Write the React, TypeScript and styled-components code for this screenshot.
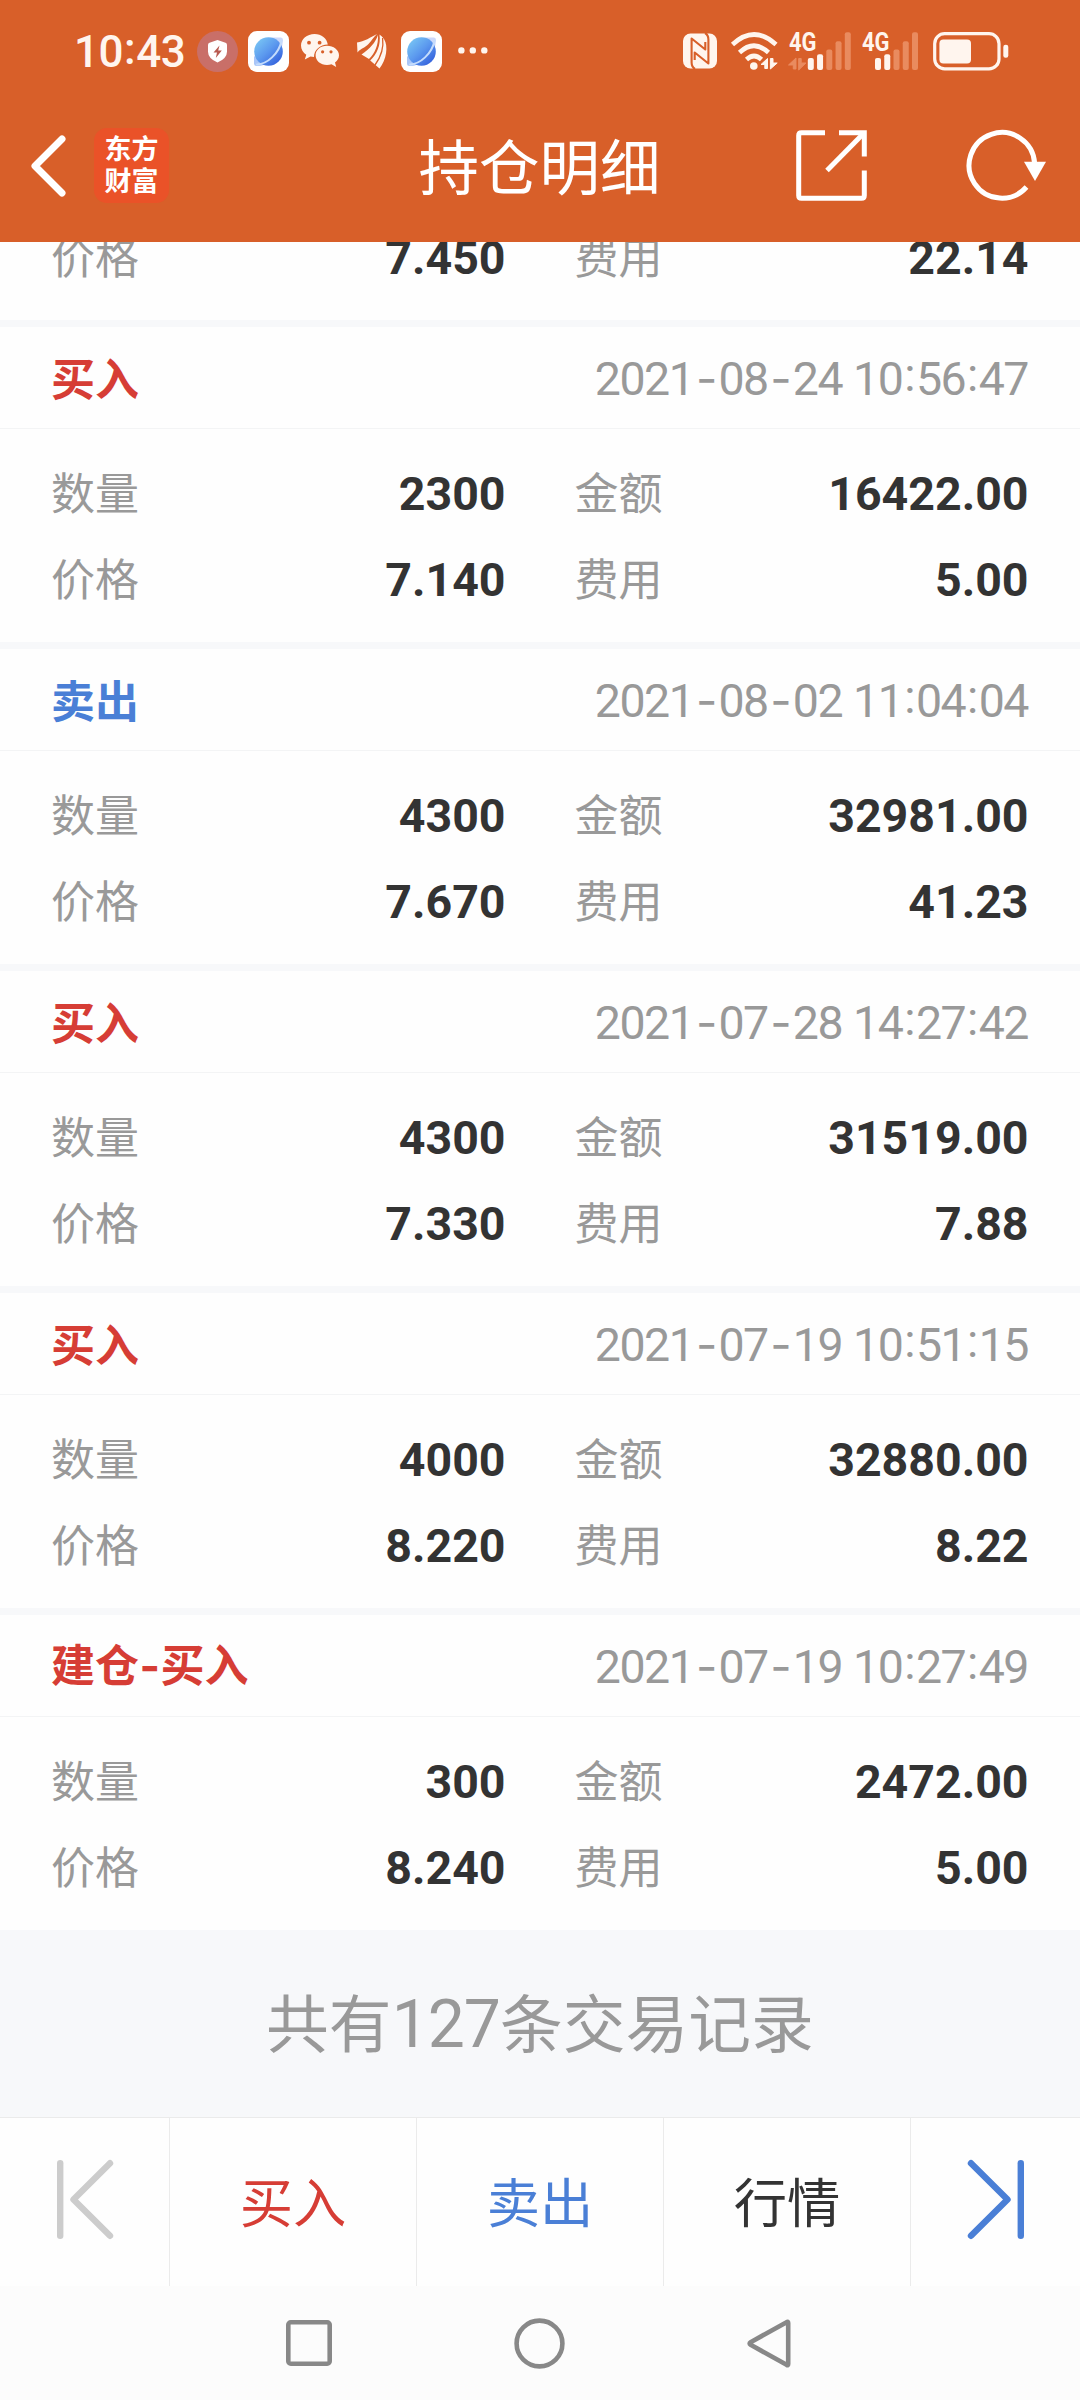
import React from "react";
import styled, { createGlobalStyle } from "styled-components";

const CJK = '"Noto Sans CJK SC", sans-serif';
const NUM = 'Roboto, "Noto Sans CJK SC", sans-serif';

const RED = "#d63d35";
const BLUE = "#4a7fd6";
const INK = "#333333";
const MUTED = "#999999";
const ORANGE = "#d85f29";
const CREAM = "#fff5ee";

const GlobalStyle = createGlobalStyle`
  *, *::before, *::after { box-sizing: border-box; }
  body { margin: 0; background: #fff; }
`;

const Screen = styled.div`
  width: 1080px;
  height: 2400px;
  display: flex;
  flex-direction: column;
  overflow: hidden;
  background: #fefefe;
  font-family: ${CJK};
`;

/* ---------- status bar ---------- */

const Header = styled.header`
  height: 242px;
  flex: none;
  background: ${ORANGE};
`;

const StatusBar = styled.div`
  height: 102px;
  padding: 0 71px 0 74px;
  display: flex;
  align-items: center;
  justify-content: space-between;
`;

const StatusGroup = styled.div`
  display: flex;
  align-items: center;
`;

const Clock = styled.span`
  width: 123px;
  padding-top: 1px;
  font: 500 44px/60px ${NUM};
  letter-spacing: -0.5px;
  color: ${CREAM};
`;

const Colon = styled.span<{ $lift: number; $gap: number }>`
  position: relative;
  top: ${(p) => -p.$lift}px;
  padding: 0 ${(p) => p.$gap}px;
`;

const Glyph = styled.svg<{ $ml?: number }>`
  display: block;
  flex: none;
  overflow: visible;
  margin-left: ${(p) => p.$ml ?? 0}px;
`;

const NetLabel = styled.text`
  font: 700 26px ${NUM};
`;

const Shield = () => (
  <Glyph width="41" height="41" viewBox="0 0 41 41">
    <circle cx="20.5" cy="20.5" r="20.5" fill="#c96f68" />
    <path
      d="M20.5 9 L28.5 11.8 Q30 12.4 30 14 V20.5 Q30 27.5 20.5 31.5 Q11 27.5 11 20.5 V14 Q11 12.4 12.5 11.8 Z"
      fill="#fff"
    />
    <path d="M22.5 14.5 L16.5 21.5 H20 L18.8 27 L24.8 19.6 H21.2 Z" fill="#b85a50" />
  </Glyph>
);

const Browser = ({ id, ml }: { id: string; ml: number }) => (
  <Glyph width="41" height="41" viewBox="0 0 41 41" $ml={ml}>
    <defs>
      <linearGradient id={id} x1="0.1" y1="0.1" x2="0.85" y2="0.9">
        <stop offset="0" stopColor="#78c4f4" />
        <stop offset="0.5" stopColor="#5b98ee" />
        <stop offset="1" stopColor="#3563dd" />
      </linearGradient>
    </defs>
    <rect width="41" height="41" rx="9" fill="#fff" />
    <path d="M24 6.5 H33 Q35 6.5 35 9 Q35 15 32 20 Z" fill="#cdd8fa" />
    <path d="M6 25 V32.5 Q6 35 8.5 35 Q13 35 17 33.5 Z" fill="#a9c6f8" />
    <circle cx="20.5" cy="20.5" r="14.3" fill={`url(#${id})`} />
    <path
      d="M9 33.5 C19 33 31 23 33.5 9.5"
      fill="none"
      stroke="#c4dcfc"
      strokeWidth="2"
      strokeLinecap="round"
    />
  </Glyph>
);

const Chat = () => (
  <Glyph width="38" height="34" viewBox="0 0 38 34" $ml={12}>
    <path
      d="M13.5 0 C6 0 0 5 0 11.5 C0 15.3 2 18.6 5.3 20.7 L3.8 25.5 L9.5 22.6 Q11 23 13 23 C13 16 19 11 26.8 10.6 C26 4.5 20.5 0 13.5 0 Z"
      fill={CREAM}
    />
    <path
      d="M26 11.8 C19.5 11.8 14.6 16 14.6 21.3 C14.6 26.7 19.5 31 26 31 Q28.5 31 30.5 30.3 L35.2 33 L34 28.6 C36.5 26.8 38 24.3 38 21.3 C38 16 32.5 11.8 26 11.8 Z"
      fill={CREAM}
    />
    <g fill={ORANGE}>
      <circle cx="8" cy="8.7" r="1.9" />
      <circle cx="18.6" cy="8.7" r="1.9" />
      <circle cx="21.6" cy="17.8" r="1.6" />
      <circle cx="30" cy="17.8" r="1.6" />
    </g>
  </Glyph>
);

const Wings = () => (
  <Glyph width="30" height="35" viewBox="0 0 30 35" $ml={17.5}>
    <g fill={CREAM}>
      <path d="M20 0 C14 3 7 8 0 8.4 L0.5 18.5 C4.5 13.5 8 14 11.5 10 C14.5 6.5 17 3 20 0 Z" />
      <path d="M21 1 C18.5 8.5 13 14.5 4.5 20.5 L12 25 C18 19 21.5 11 21 1 Z" />
      <path d="M22.5 0.5 C24 11 20 20 13.2 26.6 L22.5 34.5 C29.5 26 31.5 12 27 5 Q25 2 22.5 0.5 Z" />
    </g>
    <path d="M25.6 4 C27 14 23.5 23.5 18 31" fill="none" stroke={ORANGE} strokeWidth="1.3" />
  </Glyph>
);

const Dots = () => (
  <Glyph width="30" height="8" viewBox="0 0 30 8" $ml={15.5}>
    <g fill={CREAM}>
      <circle cx="3.4" cy="3.4" r="3.2" />
      <circle cx="14.8" cy="3.4" r="3.2" />
      <circle cx="26.3" cy="3.4" r="3.2" />
    </g>
  </Glyph>
);

const Nfc = () => (
  <Glyph width="34" height="36" viewBox="0 0 34 36">
    <rect y="0.5" width="34" height="35" rx="7.5" fill={CREAM} />
    <g fill="none" stroke={ORANGE} strokeWidth="2.1" strokeLinejoin="round">
      <path d="M12 36 Q8.6 34 8.6 29.5 V5.5 L22.3 16.5 V9" />
      <path d="M22 0 Q25.4 2 25.4 6.5 V30.5 L11.7 19.5 V27" />
    </g>
  </Glyph>
);

const Wifi = () => (
  <Glyph width="47" height="39" viewBox="0 0 47 39" $ml={14}>
    <g fill="none" stroke={CREAM} strokeWidth="4.6">
      <path d="M1.5 12.5 Q23 -7.5 45 12.5" />
      <path d="M8.5 20.5 Q23 7 37.5 20.5" />
      <path d="M15.5 27.5 Q23 20.5 30.5 27.5" />
    </g>
    <circle cx="22.8" cy="34" r="3.8" fill={CREAM} />
    <path
      d="M36.5 26.5 V36.5 H33.8 V32.5 H30 Z M39.4 37 V26.5 H42 V31 H46.2 Z"
      fill={CREAM}
      stroke={CREAM}
      strokeWidth="1"
      strokeLinejoin="round"
    />
  </Glyph>
);

const barTops = [26, 22.3, 17.5, 9.3, 0.3];

const Signal = ({ start, ml, data }: { start: number; ml: number; data?: boolean }) => (
  <Glyph width={start + 43} height="39" viewBox={`0 0 ${start + 43} 39`} $ml={ml}>
    <NetLabel x="0" y="19.3" fill={CREAM} textLength="27.5" lengthAdjust="spacingAndGlyphs">
      4G
    </NetLabel>
    {data && (
      <path
        d="M7 26 V37 H4.3 V33 H-0.5 Z M9.7 38 V26.5 H12.2 V31 H17 Z"
        fill="#e98b5f"
        stroke="#e98b5f"
        strokeWidth="1"
        strokeLinejoin="round"
      />
    )}
    {barTops.map((top, i) => (
      <rect
        key={top}
        x={start + i * 9.25}
        y={top}
        width="6"
        height={38 - top}
        rx="2"
        fill={i < 2 ? CREAM : "#e98b5f"}
      />
    ))}
  </Glyph>
);

const Battery = () => (
  <Glyph width="76" height="39" viewBox="0 0 76 39" $ml={15}>
    <rect x="1.7" y="1.7" width="64.3" height="35.2" rx="10" fill="none" stroke={CREAM} strokeWidth="3.2" />
    <rect x="6.4" y="7.4" width="31.6" height="24" rx="4" fill={CREAM} />
    <rect x="70.3" y="12.8" width="5" height="13" rx="2.3" fill={CREAM} />
  </Glyph>
);

/* ---------- title bar ---------- */

const TitleBar = styled.div`
  height: 127px;
  padding: 0 34px 0 30px;
  display: grid;
  grid-template-columns: 1fr auto 1fr;
  align-items: center;
`;

const TitleLeft = styled.div`
  display: flex;
  align-items: center;
  gap: 28px;
`;

const TitleRight = styled.div`
  display: flex;
  align-items: center;
  justify-content: flex-end;
`;

const Title = styled.h1`
  margin: 0;
  padding: 0 0 4px 3px;
  font: 400 60.5px/72px ${CJK};
  color: #fff;
`;

const AppLogo = styled.div`
  width: 75px;
  height: 75px;
  padding-bottom: 3px;
  border-radius: 13px;
  background: #ea5228;
  color: #fff;
  display: flex;
  flex-direction: column;
  justify-content: center;
  align-items: center;
  font: 700 27px/32.5px ${CJK};
`;

const BackIcon = () => (
  <Glyph width="36" height="62" viewBox="0 0 36 62">
    <path d="M32 4 L5 31 L32 58" fill="none" stroke="#fff" strokeWidth="7" strokeLinecap="round" strokeLinejoin="round" />
  </Glyph>
);

const ShareIcon = () => (
  <Glyph width="71" height="71" viewBox="0 0 71 71">
    <g fill="none" stroke="#fff" strokeWidth="5">
      <path d="M29 2.7 H5.5 Q2.7 2.7 2.7 5.5 V65.5 Q2.7 68.3 5.5 68.3 H65.5 Q68.3 68.3 68.3 65.5 V40.5" />
      <path d="M43 2.7 H68.3 V26.5" />
      <path d="M67.5 3.5 L31 40.5" />
    </g>
  </Glyph>
);

const RefreshIcon = () => (
  <Glyph width="80" height="71" viewBox="0 0 80 71" $ml={99}>
    <path d="M68.6 33 A32.8 32.8 0 1 0 60.5 57" fill="none" stroke="#fff" strokeWidth="5" />
    <path d="M58 31.7 H80 L69 51 Z" fill="#fff" />
  </Glyph>
);

/* ---------- records ---------- */

const Records = styled.main`
  height: 1688px;
  flex: none;
  display: flex;
  flex-direction: column;
  gap: 7px;
  background: #f7f8fa;
`;

const Record = styled.section<{ $clipped?: boolean }>`
  height: ${(p) => (p.$clipped ? 78 : 315)}px;
  flex: none;
  display: flex;
  flex-direction: column;
  justify-content: flex-end;
  overflow: hidden;
  background: #fefefe;
`;

const RecordHead = styled.div`
  height: 102px;
  padding: 0 51px;
  display: flex;
  align-items: center;
  justify-content: space-between;
  border-bottom: 1px solid #f3f4f5;
`;

const Side = styled.strong<{ $color: string }>`
  padding-bottom: 2px;
  font: 700 44px/60px ${CJK};
  color: ${(p) => p.$color};
`;

const Stamp = styled.time`
  padding: 2px 1px 0 0;
  font: 400 46.5px/60px ${NUM};
  letter-spacing: -1.5px;
  word-spacing: 1px;
  white-space: pre;
  color: ${MUTED};
`;

const Dash = styled.span<{ $gap: number }>`
  padding: 0 ${(p) => p.$gap}px;
  font-family: Inter, sans-serif;
`;

const Fields = styled.dl`
  margin: 0;
  padding: 19px 51px 22px;
  display: grid;
  grid-template-columns: 454.5px 454px;
  column-gap: 69px;
  grid-auto-rows: 86px;
`;

const Field = styled.div`
  display: flex;
  align-items: center;
  justify-content: space-between;
`;

const Label = styled.dt`
  font: 400 44px/60px ${CJK};
  color: ${MUTED};
`;

const Value = styled.dd`
  margin: 0;
  padding-top: 6px;
  font: 700 46.5px/60px ${NUM};
  color: ${INK};
`;

type Trade = {
  side: string;
  sell?: boolean;
  time: string;
  qty: string;
  amount: string;
  price: string;
  fee: string;
};

const trades: Trade[] = [
  { side: "买入", time: "2021-08-24 10:56:47", qty: "2300", amount: "16422.00", price: "7.140", fee: "5.00" },
  { side: "卖出", sell: true, time: "2021-08-02 11:04:04", qty: "4300", amount: "32981.00", price: "7.670", fee: "41.23" },
  { side: "买入", time: "2021-07-28 14:27:42", qty: "4300", amount: "31519.00", price: "7.330", fee: "7.88" },
  { side: "买入", time: "2021-07-19 10:51:15", qty: "4000", amount: "32880.00", price: "8.220", fee: "8.22" },
  { side: "建仓-买入", time: "2021-07-19 10:27:49", qty: "300", amount: "2472.00", price: "8.240", fee: "5.00" },
];

const punctuate = (text: string, dashGap: number) =>
  text.split(/([-:])/).map((part, i) => {
    if (part === "-")
      return (
        <Dash key={i} $gap={dashGap}>
          -
        </Dash>
      );
    if (part === ":")
      return (
        <Colon key={i} $lift={4} $gap={1.9}>
          :
        </Colon>
      );
    return part;
  });

const Pair = ({ label, value }: { label: string; value: string }) => (
  <Field>
    <Label>{label}</Label>
    <Value>{value}</Value>
  </Field>
);

/* ---------- footer ---------- */

const Summary = styled.p`
  height: 187px;
  margin: 0;
  flex: none;
  padding-top: 45px;
  background: #f7f8fa;
  color: ${MUTED};
  text-align: center;
  font: 400 62.8px/90px ${CJK};
`;

const Count = styled.span`
  font: 400 66px/60px ${NUM};
  letter-spacing: -1px;
`;

const Toolbar = styled.nav`
  height: 169px;
  flex: none;
  display: grid;
  grid-template-columns: 170px 247px 247px 247px 169px;
  border-top: 1px solid #ebebeb;
`;

const Tool = styled.button<{ $color?: string }>`
  padding: 0 0 5px;
  border: 0;
  border-right: 1px solid #ebebeb;
  background: none;
  display: flex;
  align-items: center;
  justify-content: center;
  font: 400 53.3px/76px ${CJK};
  color: ${(p) => p.$color ?? INK};
  &:last-child {
    border-right: 0;
  }
`;

const EdgeIcon = ({ color, flip }: { color: string; flip?: boolean }) => (
  <Glyph width="56" height="79" viewBox="0 0 56 79">
    <g
      transform={flip ? "translate(56 0) scale(-1 1)" : undefined}
      fill="none"
      stroke={color}
      strokeWidth="6.4"
      strokeLinecap="round"
      strokeLinejoin="round"
    >
      <path d="M3.2 3.2 V75.8" />
      <path d="M53 3.2 L16.5 39.5 L53 75.8" />
    </g>
  </Glyph>
);

const SystemNav = styled.nav`
  flex: 1;
  display: flex;
  align-items: center;
  justify-content: center;
  padding: 0 3px 0 0;
  gap: 182px;
  background: #fcfcfc;
`;

const NavGlyph = styled.svg`
  display: block;
  fill: none;
  stroke: #888;
  stroke-width: 4.6px;
  stroke-linejoin: round;
`;

export default function App() {
  return (
    <Screen>
      <GlobalStyle />
      <Header>
        <StatusBar>
          <StatusGroup>
            <Clock>
              10
              <Colon $lift={3} $gap={1}>
                :
              </Colon>
              43
            </Clock>
            <Shield />
            <Browser id="globeA" ml={10} />
            <Chat />
            <Wings />
            <Browser id="globeB" ml={14.5} />
            <Dots />
          </StatusGroup>
          <StatusGroup>
            <Nfc />
            <Wifi />
            <Signal start={18.8} ml={11} data />
            <Signal start={13} ml={11.5} />
            <Battery />
          </StatusGroup>
        </StatusBar>
        <TitleBar>
          <TitleLeft>
            <BackIcon />
            <AppLogo>
              <span>东方</span>
              <span>财富</span>
            </AppLogo>
          </TitleLeft>
          <Title>持仓明细</Title>
          <TitleRight>
            <ShareIcon />
            <RefreshIcon />
          </TitleRight>
        </TitleBar>
      </Header>

      <Records>
        <Record $clipped>
          <Fields>
            <Pair label="价格" value="7.450" />
            <Pair label="费用" value="22.14" />
          </Fields>
        </Record>
        {trades.map((t) => (
          <Record key={t.time}>
            <RecordHead>
              <Side $color={t.sell ? BLUE : RED}>{punctuate(t.side, 0.5)}</Side>
              <Stamp>{punctuate(t.time, 2.6)}</Stamp>
            </RecordHead>
            <Fields>
              <Pair label="数量" value={t.qty} />
              <Pair label="金额" value={t.amount} />
              <Pair label="价格" value={t.price} />
              <Pair label="费用" value={t.fee} />
            </Fields>
          </Record>
        ))}
      </Records>

      <Summary>
        共有<Count>127</Count>条交易记录
      </Summary>

      <Toolbar>
        <Tool>
          <EdgeIcon color="#cccccc" />
        </Tool>
        <Tool $color={RED}>买入</Tool>
        <Tool $color={BLUE}>卖出</Tool>
        <Tool>行情</Tool>
        <Tool>
          <EdgeIcon color={BLUE} flip />
        </Tool>
      </Toolbar>

      <SystemNav>
        <NavGlyph width="46" height="46" viewBox="0 0 46 46">
          <rect x="2.3" y="2.3" width="41.4" height="41.4" rx="2.5" />
        </NavGlyph>
        <NavGlyph width="51" height="51" viewBox="0 0 51 51">
          <circle cx="25.5" cy="25.5" r="22.9" />
        </NavGlyph>
        <NavGlyph width="44" height="51" viewBox="0 0 44 51">
          <path d="M39.6 4.2 Q41.2 3 41.2 5 V46 Q41.2 48 39.6 46.8 L3.6 26.8 Q1.6 25.5 3.6 24.2 Z" />
        </NavGlyph>
      </SystemNav>
    </Screen>
  );
}
